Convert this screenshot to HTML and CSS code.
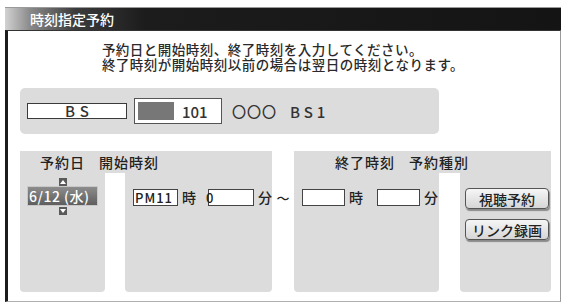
FILE: index.html
```html
<!DOCTYPE html>
<html lang="ja">
<head>
    <meta charset="UTF-8">
    <title>時刻指定予約</title>
    <link rel="stylesheet" href="styles.css">
</head>
<body>
    <div class="window">
        <div class="titlebar">時刻指定予約</div>

        <div class="window-body">
            <p class="guide">予約日と開始時刻、終了時刻を入力してください。<br>終了時刻が開始時刻以前の場合は翌日の時刻となります。</p>

            <!-- Channel row -->
            <div class="channel">
                <div class="ch-type">BS</div>
                <div class="ch-num">
                    <span class="ch-swatch"></span>
                    <span class="ch-no">101</span>
                </div>
                <span class="ch-name">〇〇〇</span>
                <span class="ch-sub">BS1</span>
            </div>

            <!-- Date / time entry -->
            <div class="timer">
                <div class="strip strip-left"></div>
                <div class="strip strip-right"></div>
                <div class="pane pane-date"></div>
                <div class="pane pane-start"></div>
                <div class="pane pane-end"></div>
                <div class="pane pane-kind"></div>

                <div class="head head-left">
                    <span>予約日</span>
                    <span>開始時刻</span>
                </div>
                <div class="head head-right">
                    <span>終了時刻</span>
                    <span>予約種別</span>
                </div>

                <div class="date">
                    <span class="spin spin-up"></span>
                    <div class="date-box">6/12 (水)</div>
                    <span class="spin spin-down"></span>
                </div>

                <div class="time time-start">
                    <span class="field field-ampm">PM11</span>
                    <span class="unit">時</span>
                    <span class="field field-min">0</span>
                    <span class="unit">分</span>
                </div>

                <div class="tilde">～</div>

                <div class="time time-end">
                    <span class="field field-end"></span>
                    <span class="unit">時</span>
                    <span class="field field-end field-gap"></span>
                    <span class="unit">分</span>
                </div>

                <div class="kinds">
                    <button class="kind-btn">視聴予約</button>
                    <button class="kind-btn">リンク録画</button>
                </div>
            </div>
        </div>
    </div>
</body>
</html>
```

FILE: styles.css
```css
* {
    margin: 0;
    padding: 0;
    box-sizing: border-box;
}

body {
    font-family: 'Noto Sans CJK JP', 'Noto Sans', sans-serif;
    font-weight: 500;
    background: #fff;
    color: #222;
}

.window {
    width: 556px;
    margin: 7px 0 0 5px;
}

.titlebar {
    height: 23px;
    line-height: 22px;
    padding-left: 25px;
    font-size: 14px;
    color: #fff;
    border-top: 1px solid #9a9a9a;
    background: linear-gradient(90deg, #d2d2d2 0, #8a8a8a 25px, #3c3c3c 70px, #1c1c1c 140px, #141414 100%);
}

.window-body {
    height: 272px;
    border-left: 3px solid #1c1c1c;
    border-right: 1px solid #9a9a9a;
    border-bottom: 1px solid #b0b0b0;
    border-top: 1px solid #333;
    padding: 11px 0 0 12px;
}

.guide {
    width: fit-content;
    margin: 0 auto;
    font-size: 13.5px;
    letter-spacing: 0.5px;
    line-height: 15px;
    color: #2a2a2a;
    transform: translateX(-7px);
}

.channel {
    width: 419px;
    height: 46px;
    margin-top: 16px;
    padding-left: 7px;
    background: #dcdcdc;
    border-radius: 5px;
    display: flex;
    align-items: center;
    font-size: 14px;
    color: #333;
}

.ch-type {
    width: 100px;
    height: 16px;
    line-height: 14px;
    border: 1px solid #3a3a3a;
    background: #fff;
    text-align: center;
    letter-spacing: 5px;
    text-indent: 5px;
    font-size: 15px;
}

.ch-num {
    width: 88px;
    height: 26px;
    margin-left: 7px;
    padding-left: 3px;
    border: 1px solid #555;
    background: #fff;
    display: flex;
    align-items: center;
}

.ch-swatch {
    width: 36px;
    height: 18px;
    background: #777;
}

.ch-no {
    margin-left: 8px;
    font-size: 15px;
}

.ch-name {
    margin-left: 10px;
    letter-spacing: 1px;
}

.ch-sub {
    margin-left: 13px;
    letter-spacing: 4px;
    font-size: 15px;
}

/* lower grid */
.timer {
    margin-top: 17px;
    display: grid;
    grid-template-columns: 85px 20px 147px 22px 145px 21px 91px;
    grid-template-rows: 22px 119px;
    font-size: 14px;
}

.strip,
.pane {
    background: #dcdcdc;
}

.strip-left {
    grid-area: 1 / 1 / 2 / 4;
    border-radius: 4px 4px 0 0;
}

.strip-right {
    grid-area: 1 / 5 / 2 / 8;
    border-radius: 4px 4px 0 0;
}

.pane {
    border-radius: 0 0 4px 4px;
}

.pane-date { grid-area: 1 / 1 / 3 / 2; }
.pane-start { grid-area: 1 / 3 / 3 / 4; }
.pane-end { grid-area: 1 / 5 / 3 / 6; }
.pane-kind { grid-area: 1 / 7 / 3 / 8; }

.head {
    display: flex;
    align-items: center;
    gap: 14px;
    letter-spacing: 1px;
    color: #222;
}

.head-left {
    grid-area: 1 / 1 / 2 / 4;
    padding-left: 20px;
}

.head-right {
    grid-area: 1 / 5 / 2 / 8;
    padding-left: 41px;
}

.date {
    grid-area: 2 / 1 / 3 / 2;
    padding-top: 5px;
    display: flex;
    flex-direction: column;
    align-items: center;
}

.spin {
    width: 8px;
    height: 8px;
    background: #5a5a5a;
    position: relative;
}

.spin::after {
    content: '';
    position: absolute;
    left: 1px;
    border-left: 3px solid transparent;
    border-right: 3px solid transparent;
}

.spin-up::after {
    top: 2px;
    border-bottom: 4px solid #fff;
}

.spin-down {
    margin-top: 1px;
}

.spin-down::after {
    top: 2px;
    border-top: 4px solid #fff;
}

.date-box {
    width: 71px;
    height: 20px;
    padding-left: 1px;
    line-height: 19px;
    white-space: nowrap;
    color: #fff;
    font-size: 14px;
    letter-spacing: 0.5px;
    border: 1px solid #c8c8c8;
    background: linear-gradient(#8c8c8c, #5e5e5e);
}

.time {
    padding-top: 16px;
    display: flex;
    align-items: flex-start;
}

.time-start {
    grid-area: 2 / 3 / 3 / 4;
    padding-left: 8px;
}

.time-end {
    grid-area: 2 / 5 / 3 / 6;
    padding-left: 8px;
}

.field {
    height: 17px;
    border: 1px solid #444;
    background: #fff;
    font-size: 13px;
    line-height: 15px;
}

.field-ampm {
    width: 45px;
    padding-left: 1px;
    letter-spacing: 1px;
}

.field-min {
    width: 46px;
    margin-left: 12px;
    text-indent: -3px;
}

.field-end {
    width: 43px;
}

.field-gap {
    margin-left: 14px;
}

.unit {
    margin-left: 4px;
    line-height: 17px;
    font-size: 14px;
}

.tilde {
    grid-area: 2 / 4 / 3 / 5;
    padding-top: 15px;
    text-align: center;
    font-size: 13px;
}

.kinds {
    grid-area: 2 / 7 / 3 / 8;
    padding: 15px 0 0 5px;
    display: flex;
    flex-direction: column;
    gap: 10px;
}

.kind-btn {
    width: 84px;
    height: 21px;
    font-family: inherit;
    font-weight: 500;
    font-size: 14px;
    line-height: 18px;
    color: #222;
    border: 1px solid #555;
    border-radius: 4px;
    background: linear-gradient(#f6f6f6, #d6d6d6);
    box-shadow: 1px 2px 1px #8a8a8a;
}
```
